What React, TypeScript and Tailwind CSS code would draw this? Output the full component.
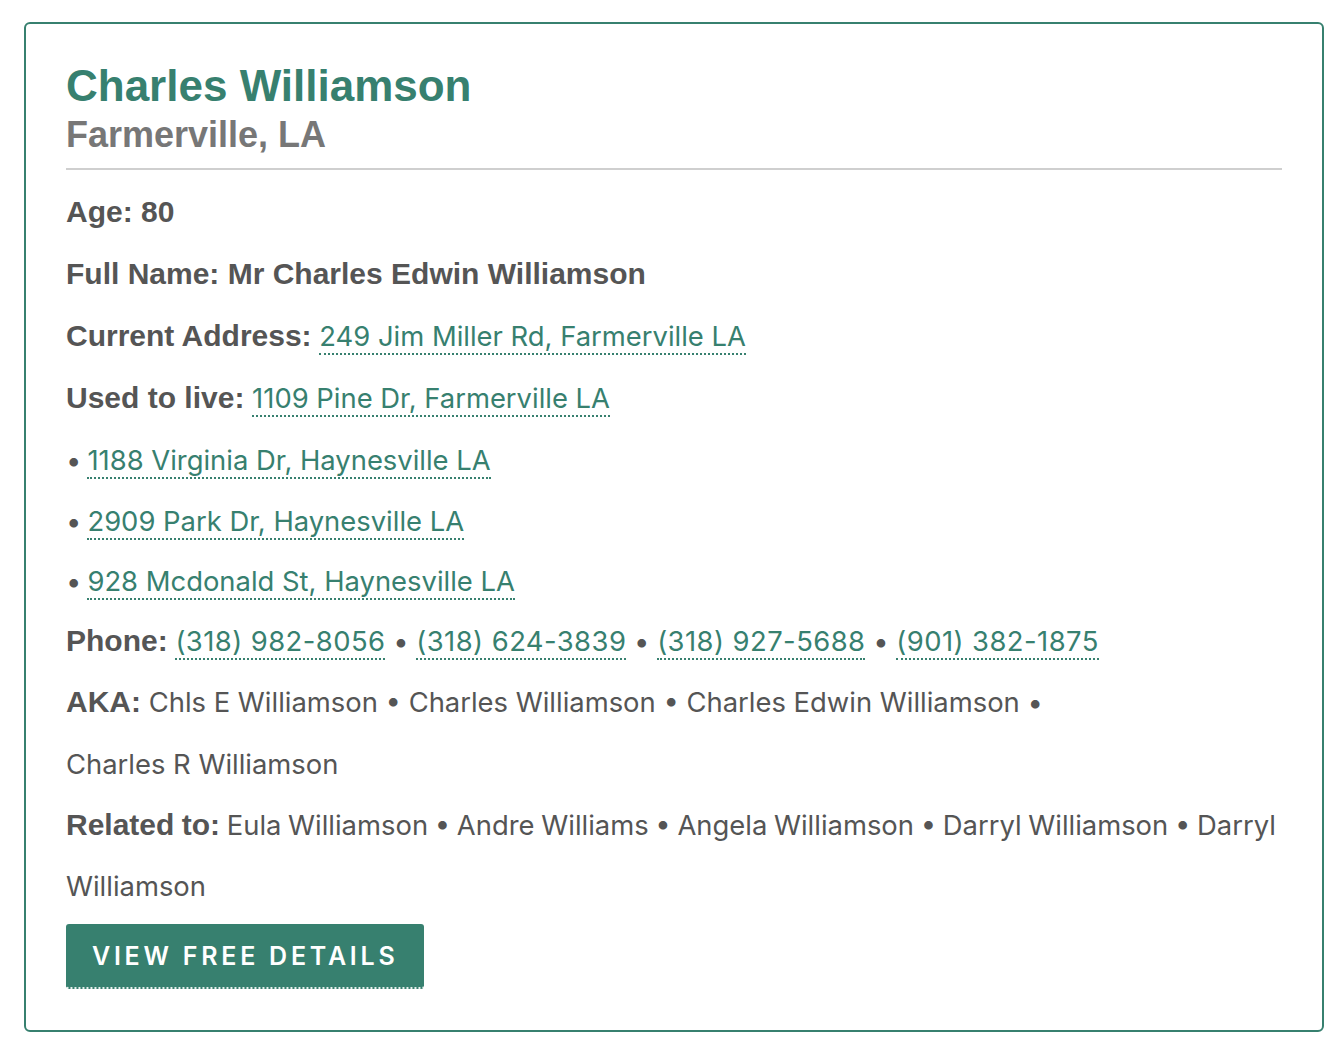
import React from 'react';

const GREEN = 'text-[#37806f]';

const Lnk: React.FC<{ children: React.ReactNode; wide?: boolean }> = ({ children, wide }) => (
  <a
    href="#"
    className={`${GREEN} border-b-2 border-dotted border-[#37806f] font-['Inter',sans-serif] font-normal ${wide ? 'tracking-[0.45px]' : ''}`}
  >
    {children}
  </a>
);

const Label: React.FC<{ children: React.ReactNode }> = ({ children }) => (
  <strong className="font-['Liberation_Sans',Arial,sans-serif] font-bold text-[30px]">{children}</strong>
);

const Row: React.FC<{ h: 60 | 62; className?: string; children: React.ReactNode }> = ({ h, className = '', children }) => (
  <div className={`${h === 62 ? 'h-[62px] leading-[62px]' : 'h-[60px] leading-[60px]'} whitespace-nowrap ${className}`}>
    {children}
  </div>
);

const Sep = () => <span className="font-['Inter',sans-serif]"> • </span>;

const phones = ['(318) 982-8056', '(318) 624-3839', '(318) 927-5688', '(901) 382-1875'];
const oldAddresses = ['1188 Virginia Dr, Haynesville LA', '2909 Park Dr, Haynesville LA', '928 Mcdonald St, Haynesville LA'];

export default function App() {
  return (
    <div className="min-h-[1050px] bg-white pl-[24px] pt-[22px] pr-[12px] pb-[20px]">
      <div className="w-[1300px] rounded-[6px] border-2 border-[#37806f] px-[40px] pt-[38px] pb-[41px] text-[#555] font-['Inter',sans-serif] text-[27.4px]">
        <h1 className={`font-['Liberation_Sans',Arial,sans-serif] font-bold text-[44px] leading-[48px] ${GREEN}`}>
          Charles Williamson
        </h1>
        <h2 className="mt-[5px] font-['Liberation_Sans',Arial,sans-serif] font-bold text-[36px] leading-[40px] text-[#777]">
          Farmerville, LA
        </h2>
        <div className="mt-[13px] mb-[11px] h-[2px] bg-[#cfcfcf]" />

        <Row h={62}>
          <Label>Age: 80</Label>
        </Row>
        <Row h={62}>
          <Label>Full Name: Mr Charles Edwin Williamson</Label>
        </Row>
        <Row h={62}>
          <Label>Current Address:</Label> <Lnk>249 Jim Miller Rd, Farmerville LA</Lnk>
        </Row>
        <Row h={62}>
          <Label>Used to live:</Label> <Lnk>1109 Pine Dr, Farmerville LA</Lnk>
        </Row>
        {oldAddresses.map((a, i) => (
          <Row key={a} h={i === 0 ? 62 : 60}>
            <span className="mr-[6px]">•</span>
            <Lnk>{a}</Lnk>
          </Row>
        ))}
        <Row h={60}>
          <Label>Phone:</Label>{' '}
          {phones.map((p, i) => (
            <React.Fragment key={p}>
              {i > 0 && <Sep />}
              <Lnk wide>{p}</Lnk>
            </React.Fragment>
          ))}
        </Row>
        <Row h={62}>
          <Label>AKA:</Label> Chls E Williamson • Charles Williamson • Charles Edwin Williamson •
        </Row>
        <Row h={62}>Charles R Williamson</Row>
        <Row h={60} className="[word-spacing:-1px]">
          <Label>Related to:</Label> Eula Williamson • Andre Williams • Angela Williamson • Darryl Williamson • Darryl
        </Row>
        <Row h={62}>Williamson</Row>

        <a
          href="#"
          className="mt-[7px] flex h-[65px] w-[358px] items-center rounded-[3px] border-b-2 border-dotted border-[#e8f0ee] bg-[#37806f] pl-[26px] pt-[2px] font-['Inter',sans-serif] text-[25px] font-semibold uppercase tracking-[0.15em] text-white"
        >
          View Free Details
        </a>
      </div>
    </div>
  );
}
